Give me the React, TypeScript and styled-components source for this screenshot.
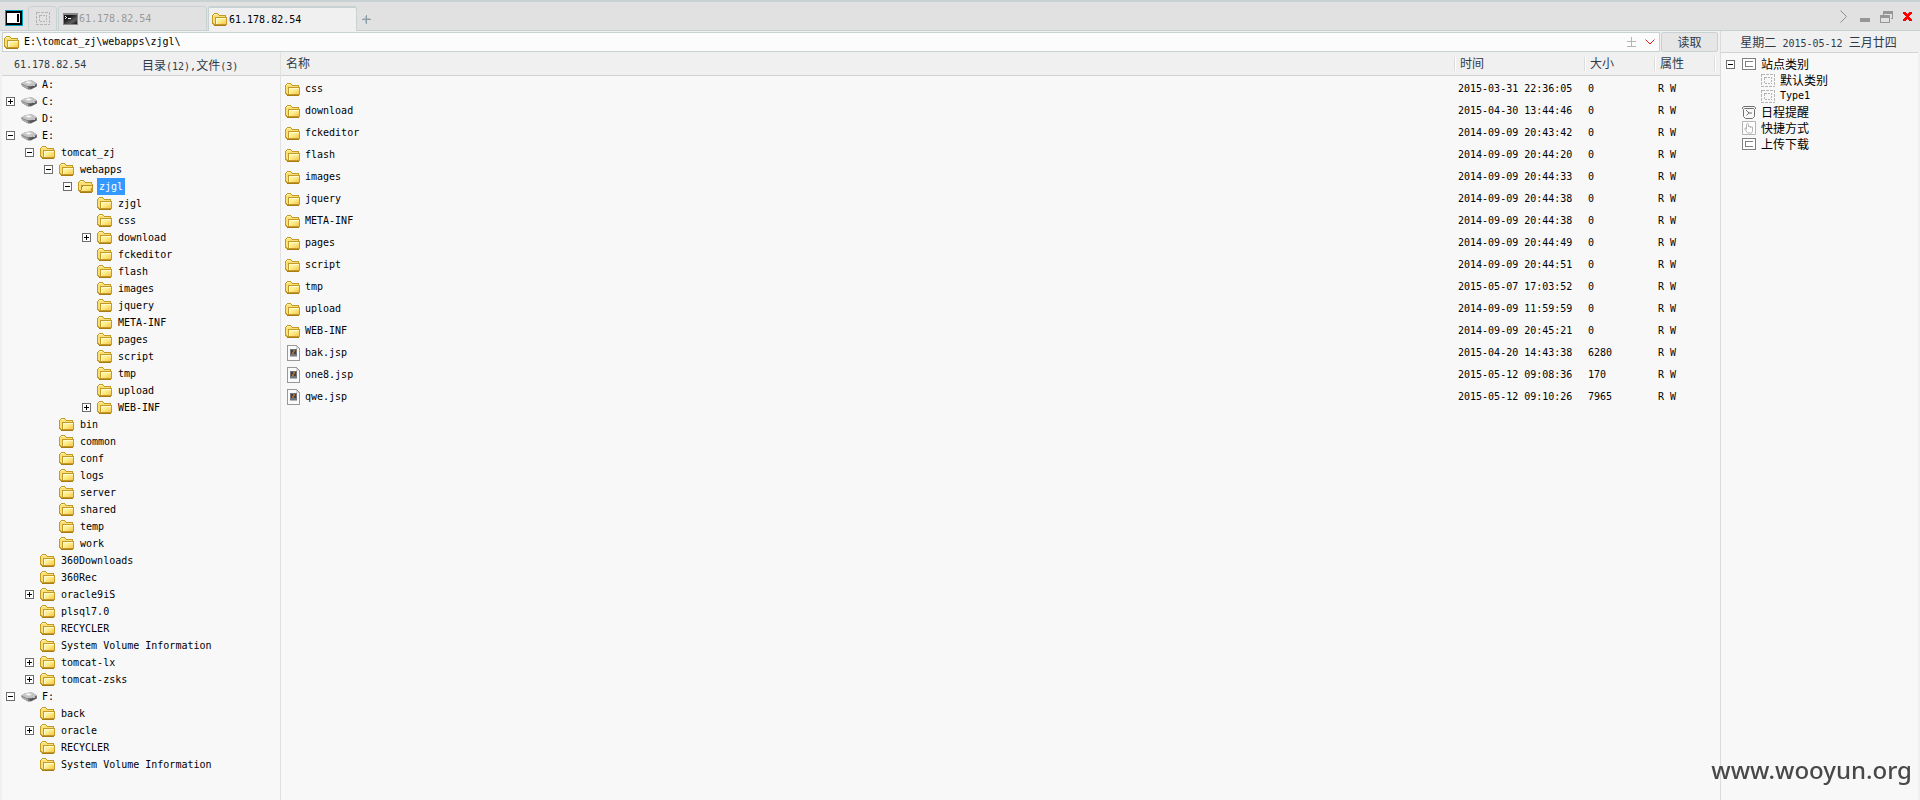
import React from "react";
import styled, { createGlobalStyle, css } from "styled-components";

const LINE = "#c8d2d2";
const MONO = `"DejaVu Sans Mono", "Liberation Mono", "Noto Sans CJK SC", monospace`;
const HAN = `"Noto Sans CJK SC", "Noto Sans", sans-serif`;

const GlobalStyle = createGlobalStyle`
  *, *::before, *::after { box-sizing: border-box; }
  body { margin: 0; background: #f0f0f0; color: #000; }
  svg { display: block; flex: none; }
  button, input { font: inherit; color: inherit; margin: 0; padding: 0; border: 0; background: none; }
  h2, ul { margin: 0; padding: 0; font-weight: normal; list-style: none; }
`;

const Window = styled.div`
  min-height: 100vh;
  display: flex;
  flex-direction: column;
  font: 10px/16px ${MONO};
`;

const Han = styled.span`
  font-family: ${HAN};
  font-size: 12px;
`;

/* ---------- title bar ---------- */

const TitleBar = styled.header`
  display: flex;
  align-items: flex-end;
  height: 31px;
  padding-left: 5px;
  background: #e1e1e1;
  border-top: 2px solid ${LINE};
  box-shadow: inset 0 -1px ${LINE};
`;

const LogoButton = styled.button`
  margin: 0 5px 5px 0;
`;

const Tabs = styled.nav`
  display: flex;
  align-items: flex-end;
  flex: 1;
`;

const Tab = styled.button<{ $width: number; $active?: boolean }>`
  display: flex;
  align-items: center;
  gap: 1px;
  width: ${(p) => p.$width}px;
  height: 25px;
  padding-left: 4px;
  margin-right: 1px;
  border: 1px solid ${LINE};
  border-radius: 3px 3px 0 0;
  color: #999;
  ${(p) =>
    p.$active &&
    css`
      color: #000;
      background: #f0f0f0;
      border-top-width: 2px;
      border-bottom: 0;
      padding-left: 3px;
      gap: 2px;
    `}
`;

const BlankTab = styled(Tab)`
  padding-left: 7px;
`;

const AddTab = styled.button`
  margin: 0 4px 7px;
`;

const WindowButtons = styled.div`
  display: flex;
  align-items: center;
  gap: 10px;
  height: 29px;
  padding-right: 8px;
`;

/* ---------- layout ---------- */

const Body = styled.div`
  display: flex;
  flex: 1;
  padding: 0 2px;
`;

const Workspace = styled.main`
  display: flex;
  flex-direction: column;
  flex: 1;
  min-width: 0;
`;

const AddressRow = styled.form`
  display: flex;
  gap: 1px;
  height: 20px;
  margin: 1px 2px 0 0;
`;

const AddressBox = styled.label`
  display: flex;
  align-items: center;
  flex: 1;
  gap: 5px;
  padding: 0 4px 0 1px;
  background: #fcfcfc;
  border: 1px solid ${LINE};
`;

const AddressInput = styled.input`
  flex: 1;
  min-width: 0;
  height: 16px;
  outline: 0;
`;

const ReadButton = styled.button`
  width: 57px;
  background: #e6e6e6;
  border: 1px solid ${LINE};
  border-radius: 2px;
  color: #2f3a48;
  line-height: 18px;
`;

const Panes = styled.div`
  display: flex;
  flex: 1;
`;

const TreePane = styled.section`
  flex: none;
  width: 279px;
  background: #f8f8f8;
  border-right: 1px solid #e1e1e1;
`;

const FilePane = styled.section`
  flex: 1;
  min-width: 0;
  background: #f8f8f8;
`;

const TreeHeader = styled.div`
  display: flex;
  height: 24px;
  padding: 0 0 0 12px;
  background: #f0f0f0;
  border-bottom: 1px solid #d2d2d2;
  line-height: 25px;
  color: #2f3a48;
`;

const Host = styled.span`
  width: 128px;
`;

/* ---------- tree ---------- */

const Tree = styled.ul``;

const Node = styled.li<{ $level: number }>`
  display: flex;
  align-items: center;
  height: 17px;
  padding-left: ${(p) => 4 + p.$level * 19}px;
`;

const ToggleSlot = styled.span`
  width: 15px;
`;

const Toggle = styled.button`
  display: block;
`;

const IconSlot = styled.span`
  width: 19px;
`;

const NodeLabel = styled.span<{ $selected?: boolean }>`
  padding: 0 2px;
  line-height: 17px;
  white-space: nowrap;
  ${(p) => p.$selected && "background: #3399ff; color: #fff;"}
`;

/* ---------- file table ---------- */

const Table = styled.table`
  width: 100%;
  table-layout: fixed;
  border-collapse: separate;
  border-spacing: 0;
`;

const NameCol = styled.col``;
const FixedCol = styled.col<{ $width: number }>`
  width: ${(p) => p.$width}px;
`;

const HeadCell = styled.th`
  height: 24px;
  padding: 1px 0 0 5px;
  background: #f0f0f0;
  border-bottom: 1px solid #d2d2d2;
  text-align: left;
  font-weight: normal;
  color: #2f3a48;
  & + & {
    background: linear-gradient(90deg, #dcdcdc 1px, #fff 1px, #fff 2px, transparent 2px) 0 5px / 100% 14px no-repeat #f0f0f0;
    padding-left: 6px;
  }
`;

const Row = styled.tr`
  &:first-child td {
    height: 24px;
    padding-top: 2px;
  }
`;

const Cell = styled.td`
  height: 22px;
  padding: 0 0 0 4px;
`;

const FileName = styled.div`
  display: flex;
  align-items: center;
`;

const FileIconSlot = styled.span`
  display: flex;
  justify-content: flex-end;
  width: 15px;
  margin-right: 5px;
`;

/* ---------- sidebar ---------- */

const Sidebar = styled.aside`
  flex: none;
  width: 198px;
  background: #f8f8f8;
  border-left: 1px solid #dcdcdc;
`;

const DateLine = styled.div`
  height: 22px;
  padding-right: 2px;
  background: #f0f0f0;
  border-bottom: 1px solid #d2d2d2;
  text-align: center;
  line-height: 21px;
  color: #2f3a48;
  white-space: pre;
`;

const Category = styled.li<{ $child?: boolean }>`
  display: flex;
  align-items: center;
  height: 16px;
  padding-left: ${(p) => (p.$child ? 24 : 5)}px;
`;

const CategoryList = styled.ul`
  padding-top: 3px;
`;

const CategoryToggle = styled.span`
  width: 16px;
`;

const CategoryIcon = styled.span`
  width: 19px;
`;

const Watermark = styled.div`
  position: fixed;
  right: 8px;
  bottom: 13px;
  font: 500 24px/34px "Noto Sans", "Open Sans", sans-serif;
  color: #484848;
`;

/* ---------- icons ---------- */

const Folder = ({ open }: { open?: boolean }) => (
  <svg width="15" height="13" viewBox="0 0 15 13" shapeRendering="crispEdges">
    <defs>
      <linearGradient id="folderFront" x1="0" y1="0" x2="1" y2="1">
        <stop offset="0" stopColor="#fffcc0" />
        <stop offset="0.5" stopColor="#fdea84" />
        <stop offset="1" stopColor="#f5c650" />
      </linearGradient>
    </defs>
    <path d="M1 1h1V0h4v1h1v1h7v2h1v8h-1v1H2v-1H1v-1H0V2h1z" fill="#c39a24" />
    <path d="M2 1h4v1h1v1h6v1h1v1H3v6H2v-1H1V2h1z" fill="#f9df74" />
    <path d="M2 1h3v1H2z" fill="#fff6b0" />
    {open ? (
      <>
        <path d="M4 5h11v3h-1v3h-1v1H2v-2h1V7h1z" fill="#b98e1c" />
        <path d="M5 6h9v2h-1v3H3v-1h1V7h1z" fill="url(#folderFront)" />
      </>
    ) : (
      <>
        <path d="M3 4h12v8H3z" fill="#c59a28" />
        <path d="M4 5h10v6H4z" fill="url(#folderFront)" />
        <path d="M4 5h10v1H4zM4 5h1v6H4z" fill="#fffad0" />
      </>
    )}
    <path d="M2 12h12v1H2z" fill="#a87c10" />
  </svg>
);

const Drive = () => (
  <svg width="16" height="10" viewBox="0 0 16 10">
    <path d="M0 3.5 5 1l6-.5 5 3v3L10 9.500H7L1 6z" fill="#777" />
    <path d="M0 3.500 5 1l6-.5 5 3-5 2.500H6z" fill="#c4c4c4" />
    <path d="M4 2.500 7 1.200l4 1-3 1.600z" fill="#f4f4f4" />
    <path d="M1 4.500 7 7v2L1 6z" fill="#aaa" />
    <path d="M8 7.500 15 4.500v2L9.500 9z" fill="#555" />
    <path d="M12 5h2v1h-2z" fill="#c8c8d8" />
  </svg>
);

const FileIcon = () => (
  <svg width="13" height="16" viewBox="0 0 13 16" shapeRendering="crispEdges">
    <path d="M0 0h10v1h1v1h1v1h1v13H0z" fill="#989898" />
    <path d="M1 1h8v3h3v11H1z" fill="#fafafa" />
    <path d="M9 1h1v1h1v1h1v1H9z" fill="#d4d4d4" />
    <path d="M3 4h7v7H3z" fill="#70767c" />
    <path d="M4 5h5v4H4z" fill="#3e4248" />
    <path d="M6 5h2v2H6zM5 7h2v2H5z" fill="#b06a2a" />
    <path d="M3 11h7v1H3z" fill="#b4b8bc" />
  </svg>
);

const PlusMinus = ({ open }: { open?: boolean }) => (
  <svg width="9" height="9" viewBox="0 0 9 9" shapeRendering="crispEdges">
    <path d="M0 0h9v9H0z" fill="#6e6e6e" />
    <path d="M1 1h7v7H1z" fill="#fff" />
    <path d={open ? "M2 4h5v1H2z" : "M2 4h5v1H2zM4 2h1v5H4z"} fill="#000" />
  </svg>
);

const Dotted = ({ color = "#b4b4b4" }: { color?: string }) => (
  <svg width="14" height="13" viewBox="0 0 14 13" shapeRendering="crispEdges">
    <path d="M.5.5h13v12H.5z" fill="none" stroke={color} strokeDasharray="3 1" />
    <path d="M3.500 3.500h7v6h-7z" fill="none" stroke={color} strokeDasharray="2 1" />
  </svg>
);

const BoxIcon = () => (
  <svg width="14" height="12" viewBox="0 0 14 12" shapeRendering="crispEdges">
    <path d="M.5.5h13v11H.5z" fill="#fff" stroke="#808080" />
    <path d="M11 3.500H3.500v5H11" fill="none" stroke="#808080" />
  </svg>
);

const ClockIcon = () => (
  <svg width="14" height="13" viewBox="0 0 14 13">
    <path d="M.5 3V1.500L2 .5h10l1.500 1V3M2.500 2.500h9l1 1v7l-2 2h-7l-2-2v-7z" fill="none" stroke="#707070" />
    <path d="m4 4 3 3 3 0M7 7 4.500 9.500" fill="none" stroke="#707070" />
  </svg>
);

const HandIcon = () => (
  <svg width="14" height="14" viewBox="0 0 14 14">
    <path d="M.5.5h13v13H.5z" fill="#fff" stroke="#b4b4b4" />
    <path
      d="M4.500 8.500V3.500a1 1 0 0 1 2 0V6M6.500 6V5.500h2V7M8.500 6h2v4.500l-1 1.500h-4L3 8.500V7h1.500"
      fill="none"
      stroke="#b4b4b4"
    />
  </svg>
);

const Logo = () => (
  <svg width="18" height="16" viewBox="0 0 18 16" shapeRendering="crispEdges">
    <path d="M0 0h18v16H0z" fill="#00a2bd" />
    <path d="M1 1h16v14H1z" fill="#000" />
    <path d="M2 2h14v12H2z" fill="#fff" />
    <path d="M2 2h14v1H2zM15 2h1v12h-1zM2 13h14v1H2z" fill="#000" />
    <path d="M12 4h2v8h-2z" fill="#000" />
  </svg>
);

const Terminal = () => (
  <svg width="15" height="12" viewBox="0 0 15 12" shapeRendering="crispEdges">
    <defs>
      <linearGradient id="screen" x1="0" y1="0" x2="1" y2="1">
        <stop offset="0.3" stopColor="#181818" />
        <stop offset="0.7" stopColor="#606060" />
        <stop offset="1" stopColor="#101010" />
      </linearGradient>
    </defs>
    <path d="M0 0h15v12H0z" fill="#8a8a8a" />
    <path d="M1 2h13v9H1z" fill="url(#screen)" />
    <path d="M2 3h1v1H2zM3 4h1v1H3zM2 5h1v1H2zM5 5h3v1H5z" fill="#fff" />
  </svg>
);

const Plus = () => (
  <svg width="9" height="9" viewBox="0 0 9 9" shapeRendering="crispEdges">
    <path d="M0 4h9v1H0zM4 0h1v9H4z" fill="#8c9ea6" />
    <path d="M1 3h7v1H1zM3 1h1v7H3z" fill="#8c9ea6" opacity=".5" />
  </svg>
);

const NextIcon = () => (
  <svg width="10" height="13" viewBox="0 0 10 13">
    <path d="m.5.5 6 6-6 6" fill="none" stroke="#909090" />
  </svg>
);

const MinimizeIcon = () => (
  <svg width="10" height="12" viewBox="0 0 10 12" shapeRendering="crispEdges">
    <path d="M0 7h10v4H0z" fill="#969696" />
  </svg>
);

const RestoreIcon = () => (
  <svg width="13" height="12" viewBox="0 0 13 12" shapeRendering="crispEdges">
    <path d="M3 0h10v8h-2V7h1V3H4v1H3zM0 4h10v8H0zm1 3v4h8V7z" fill="#969696" fillRule="evenodd" />
  </svg>
);

const CloseIcon = () => (
  <svg width="9" height="9" viewBox="0 0 9 9" shapeRendering="crispEdges">
    <path
      d="M0 0h3v1h1v1h1V1h1V0h3v2H8v1H7v1H6v1h1v1h1v1h1v2H6V8H5V7H4v1H3v1H0V7h1V6h1V5h1V4H2V3H1V2H0z"
      fill="#f00"
    />
  </svg>
);

const FoldIcon = () => (
  <svg width="9" height="11" viewBox="0 0 9 11" shapeRendering="crispEdges">
    <path d="M0 4h9v1H0zM4 0h1v9H4zM0 9h9v1H0z" fill="#b4b4b4" />
  </svg>
);

const ChevronIcon = () => (
  <svg width="10" height="6" viewBox="0 0 10 6">
    <path d="m.5.500 4.500 4.500L9.500.5" fill="none" stroke="#f01818" />
  </svg>
);

const AddressTools = styled.span`
  display: flex;
  align-items: center;
  gap: 9px;
`;

/* ---------- data ---------- */

type TreeItem = { level: number; name: string; toggle?: "open" | "closed"; selected?: boolean };

const open = (level: number, name: string, selected = false): TreeItem => ({ level, name, toggle: "open", selected });
const closed = (level: number, name: string): TreeItem => ({ level, name, toggle: "closed" });
const leaf = (level: number, name: string): TreeItem => ({ level, name });

const tree: TreeItem[] = [
  leaf(0, "A:"),
  closed(0, "C:"),
  leaf(0, "D:"),
  open(0, "E:"),
  open(1, "tomcat_zj"),
  open(2, "webapps"),
  open(3, "zjgl", true),
  leaf(4, "zjgl"),
  leaf(4, "css"),
  closed(4, "download"),
  ...["fckeditor", "flash", "images", "jquery", "META-INF", "pages", "script", "tmp", "upload"].map((n) => leaf(4, n)),
  closed(4, "WEB-INF"),
  ...["bin", "common", "conf", "logs", "server", "shared", "temp", "work"].map((n) => leaf(2, n)),
  leaf(1, "360Downloads"),
  leaf(1, "360Rec"),
  closed(1, "oracle9iS"),
  leaf(1, "plsql7.0"),
  leaf(1, "RECYCLER"),
  leaf(1, "System Volume Information"),
  closed(1, "tomcat-lx"),
  closed(1, "tomcat-zsks"),
  open(0, "F:"),
  leaf(1, "back"),
  closed(1, "oracle"),
  leaf(1, "RECYCLER"),
  leaf(1, "System Volume Information"),
];

const files: [string, string, string][] = [
  ["css", "2015-03-31 22:36:05", "0"],
  ["download", "2015-04-30 13:44:46", "0"],
  ["fckeditor", "2014-09-09 20:43:42", "0"],
  ["flash", "2014-09-09 20:44:20", "0"],
  ["images", "2014-09-09 20:44:33", "0"],
  ["jquery", "2014-09-09 20:44:38", "0"],
  ["META-INF", "2014-09-09 20:44:38", "0"],
  ["pages", "2014-09-09 20:44:49", "0"],
  ["script", "2014-09-09 20:44:51", "0"],
  ["tmp", "2015-05-07 17:03:52", "0"],
  ["upload", "2014-09-09 11:59:59", "0"],
  ["WEB-INF", "2014-09-09 20:45:21", "0"],
  ["bak.jsp", "2015-04-20 14:43:38", "6280"],
  ["one8.jsp", "2015-05-12 09:08:36", "170"],
  ["qwe.jsp", "2015-05-12 09:10:26", "7965"],
];

export default function App() {
  return (
    <Window>
      <GlobalStyle />
      <TitleBar>
        <LogoButton aria-label="Menu"><Logo /></LogoButton>
        <Tabs>
          <BlankTab $width={29} aria-label="Home"><Dotted /></BlankTab>
          <Tab $width={149}><Terminal />61.178.82.54</Tab>
          <Tab $width={149} $active><Folder />61.178.82.54</Tab>
          <AddTab aria-label="New tab"><Plus /></AddTab>
        </Tabs>
        <WindowButtons>
          <button aria-label="Next"><NextIcon /></button>
          <button aria-label="Minimize"><MinimizeIcon /></button>
          <button aria-label="Restore"><RestoreIcon /></button>
          <button aria-label="Close"><CloseIcon /></button>
        </WindowButtons>
      </TitleBar>
      <Body>
        <Workspace>
          <AddressRow onSubmit={(e) => e.preventDefault()}>
            <AddressBox>
              <Folder />
              <AddressInput aria-label="Path" defaultValue={"E:\\tomcat_zj\\webapps\\zjgl\\"} />
              <AddressTools>
                <button type="button" aria-label="Fold"><FoldIcon /></button>
                <button type="button" aria-label="History"><ChevronIcon /></button>
              </AddressTools>
            </AddressBox>
            <ReadButton><Han>读取</Han></ReadButton>
          </AddressRow>
          <Panes>
            <TreePane>
              <TreeHeader>
                <Host>61.178.82.54</Host>
                <span><Han>目录</Han>(12),<Han>文件</Han>(3)</span>
              </TreeHeader>
              <Tree>
                {tree.map((n, i) => (
                  <Node key={i} $level={n.level}>
                    <ToggleSlot>
                      {n.toggle && (
                        <Toggle aria-label={`Toggle ${n.name}`}><PlusMinus open={n.toggle === "open"} /></Toggle>
                      )}
                    </ToggleSlot>
                    <IconSlot>{n.level === 0 ? <Drive /> : <Folder open={n.selected} />}</IconSlot>
                    <NodeLabel $selected={n.selected}>{n.name}</NodeLabel>
                  </Node>
                ))}
              </Tree>
            </TreePane>
            <FilePane>
              <Table>
                <colgroup>
                  <NameCol />
                  <FixedCol $width={130} />
                  <FixedCol $width={70} />
                  <FixedCol $width={60} />
                  <FixedCol $width={6} />
                </colgroup>
                <thead>
                  <tr>
                    <HeadCell><Han>名称</Han></HeadCell>
                    <HeadCell><Han>时间</Han></HeadCell>
                    <HeadCell><Han>大小</Han></HeadCell>
                    <HeadCell><Han>属性</Han></HeadCell>
                    <HeadCell />
                  </tr>
                </thead>
                <tbody>
                  {files.map(([name, time, size]) => (
                    <Row key={name}>
                      <Cell>
                        <FileName>
                          <FileIconSlot>{name.endsWith(".jsp") ? <FileIcon /> : <Folder />}</FileIconSlot>
                          {name}
                        </FileName>
                      </Cell>
                      <Cell>{time}</Cell>
                      <Cell>{size}</Cell>
                      <Cell>R W</Cell>
                      <Cell />
                    </Row>
                  ))}
                </tbody>
              </Table>
            </FilePane>
          </Panes>
        </Workspace>
        <Sidebar>
          <DateLine><Han>星期二</Han> 2015-05-12 <Han>三月廿四</Han></DateLine>
          <CategoryList>
            <Category>
              <CategoryToggle><Toggle aria-label="Toggle"><PlusMinus open /></Toggle></CategoryToggle>
              <CategoryIcon><BoxIcon /></CategoryIcon>
              <Han>站点类别</Han>
            </Category>
            <Category $child>
              <CategoryToggle />
              <CategoryIcon><Dotted /></CategoryIcon>
              <Han>默认类别</Han>
            </Category>
            <Category $child>
              <CategoryToggle />
              <CategoryIcon><Dotted /></CategoryIcon>
              Type1
            </Category>
            <Category>
              <CategoryToggle />
              <CategoryIcon><ClockIcon /></CategoryIcon>
              <Han>日程提醒</Han>
            </Category>
            <Category>
              <CategoryToggle />
              <CategoryIcon><HandIcon /></CategoryIcon>
              <Han>快捷方式</Han>
            </Category>
            <Category>
              <CategoryToggle />
              <CategoryIcon><BoxIcon /></CategoryIcon>
              <Han>上传下载</Han>
            </Category>
          </CategoryList>
        </Sidebar>
      </Body>
      <Watermark>www.wooyun.org</Watermark>
    </Window>
  );
}
